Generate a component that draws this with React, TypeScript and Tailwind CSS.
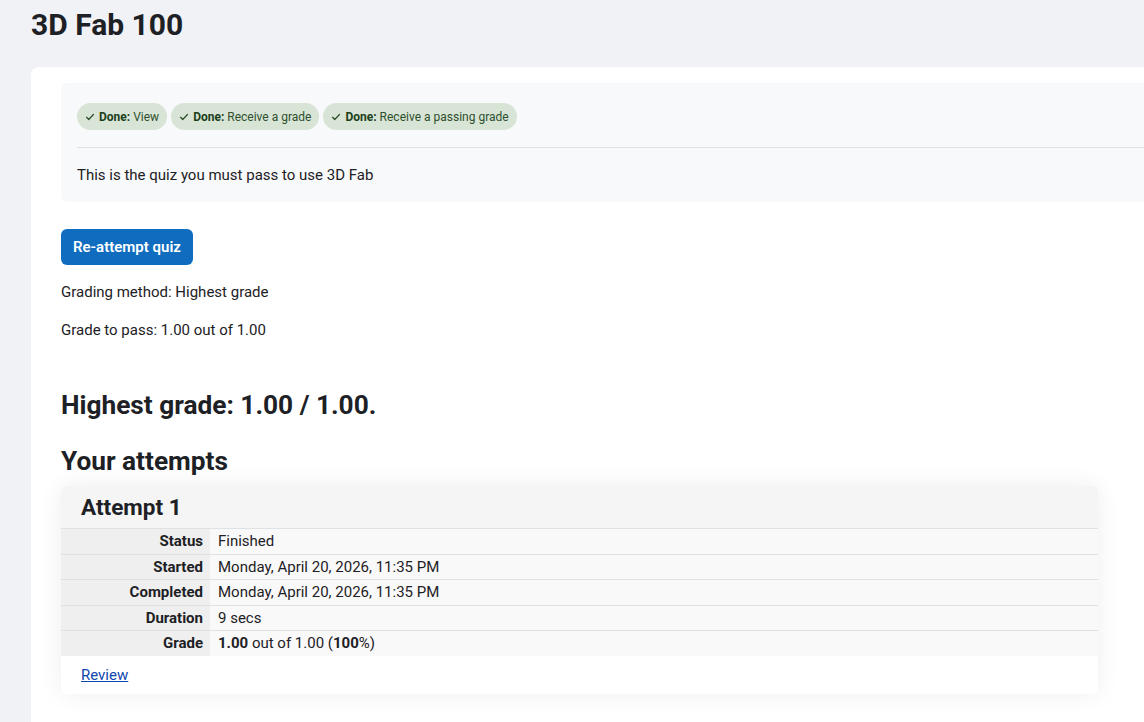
import React from 'react';

const badges = [
  { label: 'View' },
  { label: 'Receive a grade' },
  { label: 'Receive a passing grade' },
];

const rows: { label: string; value: React.ReactNode }[] = [
  { label: 'Status', value: 'Finished' },
  { label: 'Started', value: 'Monday, April 20, 2026, 11:35 PM' },
  { label: 'Completed', value: 'Monday, April 20, 2026, 11:35 PM' },
  { label: 'Duration', value: '9 secs' },
  {
    label: 'Grade',
    value: (
      <>
        <b>1.00</b> out of 1.00 (<b>100</b>%)
      </>
    ),
  },
];

const Check = () => (
  <svg className="w-[10px] h-[10px] mr-1" viewBox="0 0 16 16" fill="none" stroke="currentColor" strokeWidth={2}>
    <path d="M2.5 8.5l3.5 3.5 7.5-8" strokeLinecap="round" strokeLinejoin="round" />
  </svg>
);

export default function App() {
  return (
    <div
      className="min-h-[722px] bg-[#f1f2f6] text-[#1d2125] overflow-hidden"
      style={{ fontFamily: 'Roboto, "Liberation Sans", sans-serif' }}
    >
      <div className="pl-[31px] pt-[6px]">
        <h1 className="text-[30px] font-bold leading-[38px] h-[61px]">3D Fab 100</h1>

        {/* main card */}
        <div className="bg-white rounded-tl-[8px] pl-[30px] pt-[16px] pb-[40px] min-h-[660px]">
          {/* activity info */}
          <div className="bg-[#f8f9fa] rounded-l-[6px] pl-[16px] pt-[20px] pb-[16px]">
            <div className="flex gap-[4px]">
              {badges.map((b) => (
                <span
                  key={b.label}
                  className="inline-flex items-center h-[27px] px-[8px] rounded-full bg-[#d7e4d6] text-[#2f4f2d] text-[12px]"
                >
                  <Check />
                  <b className="font-bold text-[#1c3f1a] mr-[3px]">Done:</b>
                  {b.label}
                </span>
              ))}
            </div>
            <div className="border-t border-[#dee2e6] mt-[17px] pt-[17px] pb-[1px] text-[15px] leading-[20px]">
              This is the quiz you must pass to use 3D Fab
            </div>
          </div>

          <button className="mt-[27px] h-[36px] px-[12px] rounded-[6px] bg-[#0f6cbf] text-white text-[15px] font-semibold">
            Re-attempt quiz
          </button>

          <p className="text-[15px] leading-[20px] mt-[17px]">Grading method: Highest grade</p>
          <p className="text-[15px] leading-[20px] mt-[18px]">Grade to pass: 1.00 out of 1.00</p>

          <h3 className="text-[26.25px] font-bold leading-[30px] mt-[50px]">Highest grade: 1.00 / 1.00.</h3>
          <h3 className="text-[26.25px] font-bold leading-[30px] mt-[26px]">Your attempts</h3>

          <div className="mt-[10px] w-[1037px] bg-white rounded-[6px] shadow-[0_0_24px_rgba(0,0,0,0.07)] overflow-hidden">
            <div className="bg-[#f5f5f5] h-[42px] pl-[20px] flex items-center">
              <h3 className="text-[22.5px] font-bold leading-[28px]">Attempt 1</h3>
            </div>
            <table className="w-full text-[15px] border-collapse">
              <tbody>
                {rows.map((r) => (
                  <tr key={r.label} className="border-t border-[#dee2e6] h-[25.5px]">
                    <th className="w-[149px] bg-[#efefef] text-right font-bold pr-[7px] py-0">{r.label}</th>
                    <td className="bg-[#f9f9f9] pl-[8px] py-0">{r.value}</td>
                  </tr>
                ))}
              </tbody>
            </table>
            <div className="h-[38px] pl-[20px] flex items-center">
              <a href="#" className="text-[15px] text-[#0f47ad] underline">
                Review
              </a>
            </div>
          </div>
        </div>
      </div>
    </div>
  );
}
